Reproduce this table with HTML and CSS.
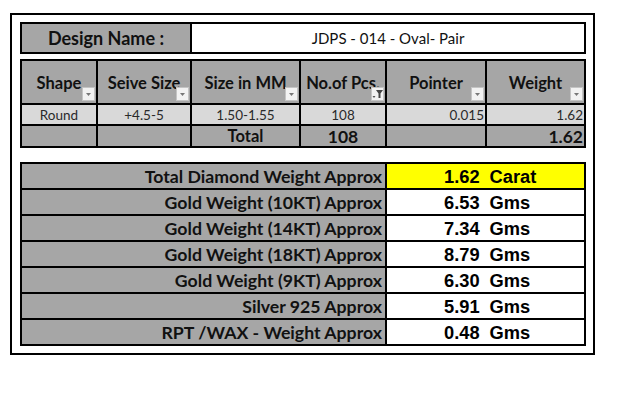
FILE: index.html
```html
<!DOCTYPE html>
<html>
<head>
<meta charset="utf-8">
<link rel="stylesheet" href="styles.css">
</head>
<body>
<div class="sheet">
  <div class="design">
    <div class="cell gray center dn-label">Design Name :</div>
    <div class="cell white center dn-value">JDPS - 014 - Oval- Pair</div>
  </div>

  <div class="grid">
    <div class="cell gray center hdr">Shape<span class="dd"><svg width="13" height="14" viewBox="0 0 13 14"><polygon points="4,6 9,6 6.5,9" fill="#777"/></svg></span></div>
    <div class="cell gray center hdr">Seive Size<span class="dd"><svg width="13" height="14" viewBox="0 0 13 14"><polygon points="4,6 9,6 6.5,9" fill="#777"/></svg></span></div>
    <div class="cell gray center hdr">Size in MM<span class="dd"><svg width="13" height="14" viewBox="0 0 13 14"><polygon points="4,6 9,6 6.5,9" fill="#777"/></svg></span></div>
    <div class="cell gray center hdr">No.of Pcs.<span class="dd"><svg width="13" height="14" viewBox="0 0 13 14"><polygon points="5,3 12,3 9.5,6.5 9.5,11 7.5,11 7.5,6.5" fill="#444"/><polygon points="1.5,9 4.5,9 3,11" fill="#555"/></svg></span></div>
    <div class="cell gray center hdr">Pointer<span class="dd"><svg width="13" height="14" viewBox="0 0 13 14"><polygon points="4,6 9,6 6.5,9" fill="#777"/></svg></span></div>
    <div class="cell gray center hdr">Weight<span class="dd"><svg width="13" height="14" viewBox="0 0 13 14"><polygon points="4,6 9,6 6.5,9" fill="#777"/></svg></span></div>

    <div class="cell light center data">Round</div>
    <div class="cell light center data">+4.5-5</div>
    <div class="cell light center data">1.50-1.55</div>
    <div class="cell light center data">108</div>
    <div class="cell light right data">0.015</div>
    <div class="cell light right data">1.62</div>

    <div class="cell gray"></div>
    <div class="cell gray"></div>
    <div class="cell gray center tot">Total</div>
    <div class="cell gray center tot big">108</div>
    <div class="cell gray"></div>
    <div class="cell gray right tot big">1.62</div>
  </div>

  <div class="summary">
    <div class="cell gray right lbl">Total Diamond Weight Approx</div>
    <div class="cell yellow val"><span class="num">1.62</span><span class="unit">Carat</span></div>
    <div class="cell gray right lbl">Gold Weight (10KT) Approx</div>
    <div class="cell white val"><span class="num">6.53</span><span class="unit">Gms</span></div>
    <div class="cell gray right lbl">Gold Weight (14KT) Approx</div>
    <div class="cell white val"><span class="num">7.34</span><span class="unit">Gms</span></div>
    <div class="cell gray right lbl">Gold Weight (18KT) Approx</div>
    <div class="cell white val"><span class="num">8.79</span><span class="unit">Gms</span></div>
    <div class="cell gray right lbl">Gold Weight (9KT) Approx</div>
    <div class="cell white val"><span class="num">6.30</span><span class="unit">Gms</span></div>
    <div class="cell gray right lbl">Silver 925 Approx</div>
    <div class="cell white val"><span class="num">5.91</span><span class="unit">Gms</span></div>
    <div class="cell gray right lbl">RPT /WAX - Weight Approx</div>
    <div class="cell white val"><span class="num">0.48</span><span class="unit">Gms</span></div>
  </div>
</div>
</body>
</html>
```

FILE: styles.css
```css
html, body {
  margin: 0;
  background: #fff;
}
body {
  font-family: Lato, "Open Sans", "DejaVu Sans", sans-serif;
  color: #111;
}
.sheet {
  margin: 13px 0 0 10px;
  width: 585px;
  box-sizing: border-box;
  border: 2px solid #000;
  padding: 7px 7px 7px 8px;
}
.design, .grid, .summary {
  display: grid;
  gap: 2px;
  padding: 2px;
  background: #000;
}
.design {
  grid-template-columns: 168px 392px;
  grid-template-rows: 28px;
}
.grid {
  margin-top: 5px;
  grid-template-columns: 74px 92px 107px 84px 98px 97px;
  grid-template-rows: 42px 19px 20px;
}
.summary {
  margin-top: 14px;
  grid-template-columns: 363px 197px;
  grid-auto-rows: 24px;
}
.cell {
  display: flex;
  align-items: center;
  position: relative;
  overflow: hidden;
  white-space: nowrap;
}
.center { justify-content: center; }
.right { justify-content: flex-end; padding-right: 1px; }
.gray { background: #a6a6a6; }
.light { background: #d9d9d9; }
.white { background: #fff; }
.yellow { background: #ffff00; }

.dn-label { font-weight: 700; font-size: 18px; }
.dn-value { font-size: 15px; }
.hdr { font-weight: 700; font-size: 16.5px; padding-top: 1px; }
.data { font-size: 13.5px; color: #2a2a2a; }
.tot { font-weight: 700; font-size: 16.5px; }
.big { font-size: 17.5px; }

.dd {
  position: absolute;
  right: 1px;
  bottom: 2px;
  width: 13px;
  height: 14px;
  box-sizing: border-box;
  background: #f2f2f2;
  border: 1px solid #c4c4c4;
  display: flex;
}
.dd svg { display: block; margin: -1px; }

.lbl {
  font-weight: 700;
  font-size: 17.7px;
  padding-right: 3px;
}
.val {
  font-family: "Liberation Sans", Arial, sans-serif;
  font-weight: 700;
  font-size: 18.3px;
  color: #000;
  padding-left: 57px;
  padding-top: 1px;
}
.unit { margin-left: 10px; }
```
